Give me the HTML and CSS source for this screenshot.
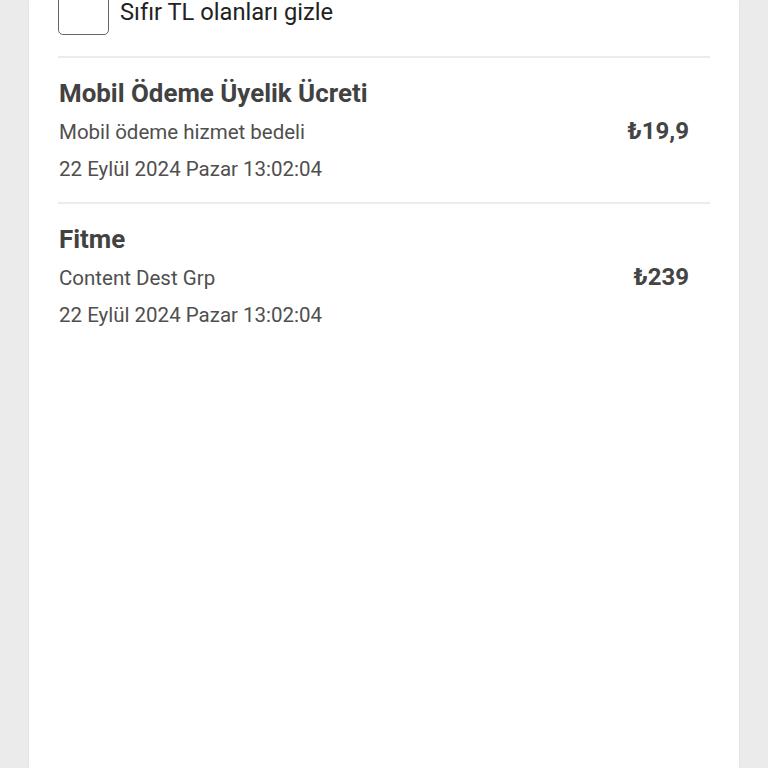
FILE: index.html
```html
<!DOCTYPE html>
<html lang="tr">
<head>
    <meta charset="UTF-8">
    <meta name="viewport" content="width=device-width, initial-scale=1.0">
    <title>Ödemeler</title>
    <link rel="stylesheet" href="styles.css">
</head>
<body>
    <div class="card">
        <label class="filter">
            <span class="box"></span>
            <span class="filter-text">Sıfır TL olanları gizle</span>
        </label>

        <div class="item">
            <div class="info">
                <div class="title">Mobil Ödeme Üyelik Ücreti</div>
                <div class="sub">Mobil ödeme hizmet bedeli</div>
                <div class="sub">22 Eylül 2024 Pazar 13:02:04</div>
            </div>
            <div class="amount">₺19,9</div>
        </div>

        <div class="item">
            <div class="info">
                <div class="title">Fitme</div>
                <div class="sub">Content Dest Grp</div>
                <div class="sub">22 Eylül 2024 Pazar 13:02:04</div>
            </div>
            <div class="amount">₺239</div>
        </div>
    </div>
</body>
</html>
```

FILE: styles.css
```css
body {
    margin: 0;
    background-color: #ebebeb;
    font-family: Roboto, "Noto Sans", sans-serif;
    color: #333;
}
.card {
    background-color: #fff;
    margin: 0 29px 0 29px;
    min-height: 100vh;
    padding: 0 29px;
    box-sizing: border-box;
    overflow: hidden;
    box-shadow: 0 0 3px rgba(0,0,0,0.06);
}
.filter {
    display: flex;
    align-items: flex-start;
    gap: 11px;
    padding-bottom: 21px;
    border-bottom: 2px solid #ececec;
}
.box {
    width: 51px;
    height: 51px;
    box-sizing: border-box;
    border: 1.5px solid #666;
    border-radius: 5px;
    flex-shrink: 0;
    margin-top: -16px;
}
.filter-text {
    font-size: 23.7px;
    line-height: 24px;
    color: #222;
}
.item {
    display: flex;
    align-items: center;
    padding: 20px 21px 14px 1px;
    border-bottom: 2px solid #ececec;
}
.item:last-child {
    border-bottom: none;
}
.info {
    flex: 1;
}
.title {
    font-size: 25.9px;
    line-height: 30px;
    font-weight: bold;
    color: #424242;
    margin-bottom: 6px;
}
.sub {
    font-size: 20.5px;
    line-height: 37px;
    color: #4f4f4f;
}
.amount {
    font-size: 24px;
    line-height: 30px;
    font-weight: bold;
    color: #444;
    margin-bottom: 4px;
}
```
